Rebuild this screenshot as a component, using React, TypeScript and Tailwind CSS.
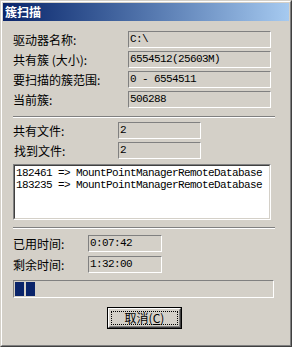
import React from 'react';

const cjk = "font-['Noto_Sans_CJK_SC',sans-serif] text-[12px] leading-none text-black";
const mono = "font-['Liberation_Mono',monospace] text-[11px] tracking-[-0.6px] leading-none text-black";

interface RowProps {
    label: string;
    value: string;
    labelClass: string;
    fieldClass: string;
}

const InfoRow: React.FC<RowProps> = ({ label, value, labelClass, fieldClass }) => (
    <div className="flex items-center h-[17px]">
        <span className={`${cjk} ${labelClass} whitespace-nowrap`}>{label}</span>
        <div className={`${fieldClass} h-[17px] flex items-center pl-px border border-t-[#808080] border-l-[#808080] border-r-white border-b-white`}>
            <span className={mono}>{value}</span>
        </div>
    </div>
);

const Separator: React.FC<{ className?: string }> = ({ className }) => (
    <div className={`w-[262px] h-[2px] border-t border-t-[#808080] border-b border-b-white ${className ?? ''}`} />
);

const App: React.FC = () => {
    const files = [
        '182461 => MountPointManagerRemoteDatabase',
        '183235 => MountPointManagerRemoteDatabase',
    ];

    return (
        <div className="w-[292px] h-[347px] border border-t-[#d4d0c8] border-l-[#d4d0c8] border-r-[#404040] border-b-[#404040]">
            <div className="h-full flex flex-col p-px bg-[#d4d0c8] border border-t-white border-l-white border-r-[#808080] border-b-[#808080]">
                {/* title bar */}
                <div className="h-[18px] flex items-center pl-[2px] bg-linear-to-r from-[#0a246a] to-[#a6caf0]">
                    <span className="font-['Noto_Sans_CJK_SC',sans-serif] text-[12px] font-bold leading-none text-white">簇扫描</span>
                </div>

                <main className="flex flex-col pl-[10px]">
                    <div className="mt-[10px] flex flex-col gap-[3px]">
                        <InfoRow label="驱动器名称:" value="C:\" labelClass="w-[115px]" fieldClass="w-[143px]" />
                        <InfoRow label="共有簇 (大小):" value="6554512(25603M)" labelClass="w-[115px]" fieldClass="w-[143px]" />
                        <InfoRow label="要扫描的簇范围:" value="0 - 6554511" labelClass="w-[115px]" fieldClass="w-[143px]" />
                        <InfoRow label="当前簇:" value="506288" labelClass="w-[115px]" fieldClass="w-[143px]" />
                    </div>

                    <Separator className="mt-[8px]" />

                    <div className="mt-[4px] flex flex-col gap-[3px]">
                        <InfoRow label="共有文件:" value="2" labelClass="w-[105px]" fieldClass="w-[83px]" />
                        <InfoRow label="找到文件:" value="2" labelClass="w-[105px] pl-px" fieldClass="w-[83px]" />
                    </div>

                    <div className="mt-[5px] w-[258px] h-[56px] border border-t-[#808080] border-l-[#808080] border-r-white border-b-white">
                        <div className="h-full bg-white pt-px pl-px border border-t-[#404040] border-l-[#404040] border-r-[#d4d0c8] border-b-[#d4d0c8]">
                            {files.map((f) => (
                                <div key={f} className={`${mono} h-[12px] flex items-center whitespace-pre`}>
                                    {f}
                                </div>
                            ))}
                        </div>
                    </div>

                    <Separator className="mt-[7px]" />

                    <div className="mt-[6px] flex flex-col gap-[4px]">
                        <InfoRow label="已用时间:" value="0:07:42" labelClass="w-[75px]" fieldClass="w-[74px]" />
                        <InfoRow label="剩余时间:" value="1:32:00" labelClass="w-[75px]" fieldClass="w-[74px]" />
                    </div>

                    <div className="mt-[7px] w-[261px] h-[18px] flex gap-[2px] p-px border border-t-[#808080] border-l-[#808080] border-r-white border-b-white">
                        <div className="w-[9px] h-[14px] bg-[#0a246a]" />
                        <div className="w-[9px] h-[14px] bg-[#0a246a]" />
                    </div>

                    <div className="mt-[9px] ml-[94px] w-[75px] h-[22px] border border-black">
                        <div className="h-full border border-t-white border-l-white border-r-[#404040] border-b-[#404040]">
                            <div className="h-full p-px border border-t-[#d4d0c8] border-l-[#d4d0c8] border-r-[#808080] border-b-[#808080]">
                                <div className="h-full flex items-center justify-center border border-dotted border-black">
                                    <span className={`${cjk}`}>
                                        取消(<span className="underline">C</span>)
                                    </span>
                                </div>
                            </div>
                        </div>
                    </div>
                </main>
            </div>
        </div>
    );
};

export default App;
